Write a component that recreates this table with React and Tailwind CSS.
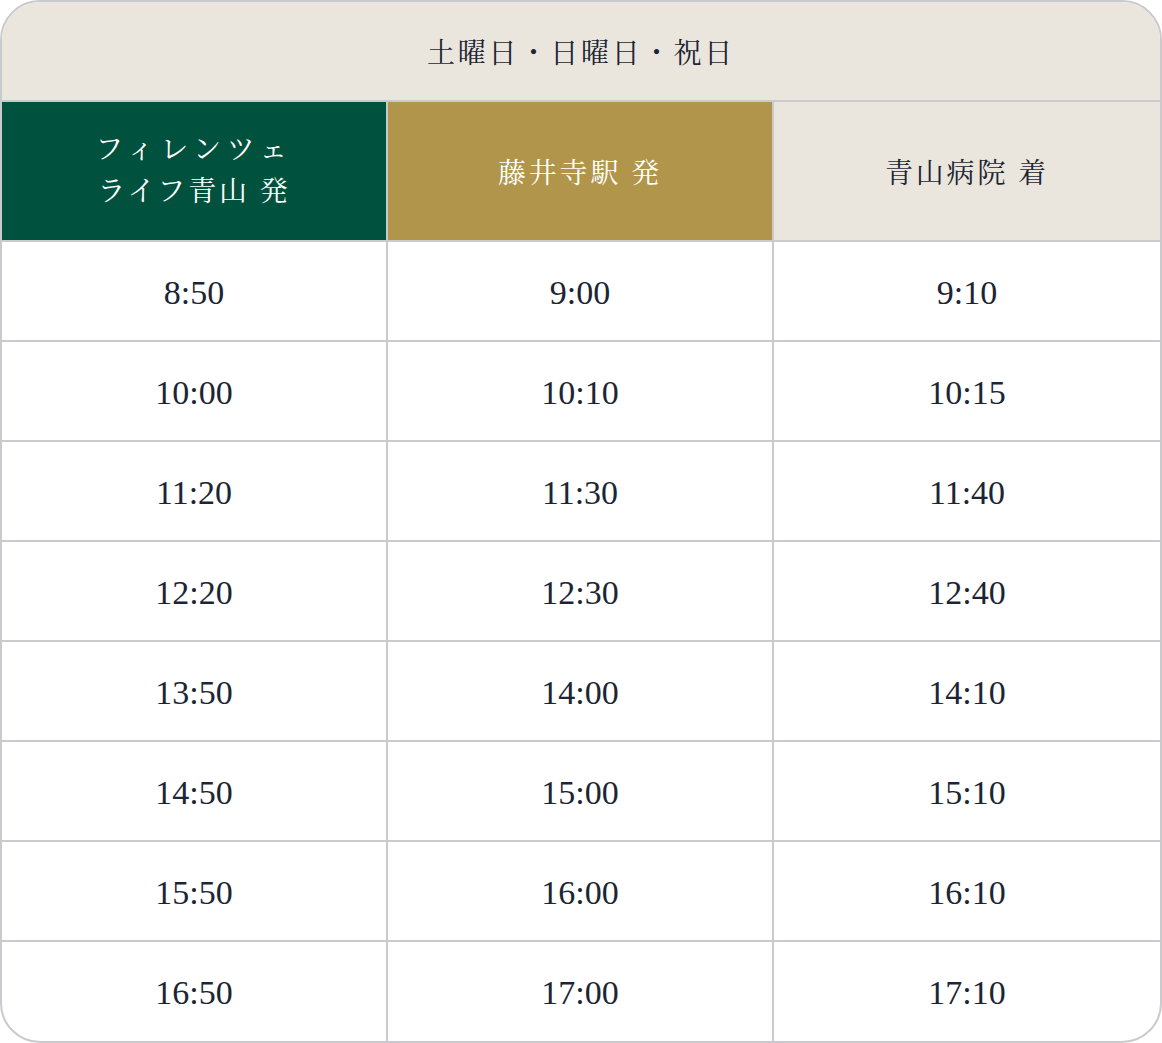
const rows = [
  ['8:50', '9:00', '9:10'],
  ['10:00', '10:10', '10:15'],
  ['11:20', '11:30', '11:40'],
  ['12:20', '12:30', '12:40'],
  ['13:50', '14:00', '14:10'],
  ['14:50', '15:00', '15:10'],
  ['15:50', '16:00', '16:10'],
  ['16:50', '17:00', '17:10'],
]

const serif = {
  fontFamily: '"Noto Serif CJK JP", "Liberation Serif", "Noto Sans CJK JP", serif',
}

export default function App() {
  return (
    <div className="w-[1162px] bg-white" style={serif}>
      <div className="border-2 border-[#c9c9ce] rounded-[40px] overflow-hidden text-[#1c2533]">
        <div className="h-[100px] bg-[#ebe6dd] flex items-center justify-center text-[28px] tracking-[0.1em] border-b-2 border-[#c9c9ce]">
          土曜日・日曜日・祝日
        </div>

        <div className="grid grid-cols-3 h-[140px] border-b-2 border-[#c9c9ce] divide-x-2 divide-[#c9c9ce] text-[28px] tracking-[0.1em] leading-[42px]">
          <div className="bg-[#00513d] text-white flex flex-col items-center justify-center pb-[6px]">
            <span className="tracking-[0.2em]">フィレンツェ</span>
            <span>ライフ青山 発</span>
          </div>
          <div className="bg-[#b0954a] text-white flex items-center justify-center">藤井寺駅 発</div>
          <div className="bg-[#ebe6dd] flex items-center justify-center">青山病院 着</div>
        </div>

        {rows.map((r, i) => (
          <div
            key={i}
            className={`grid grid-cols-3 divide-x-2 divide-[#c9c9ce] ${i < rows.length - 1 ? 'h-[100px] border-b-2 border-[#c9c9ce]' : 'h-[99px]'}`}
          >
            {r.map((t, j) => (
              <div key={j} className="flex items-center justify-center text-[34px] pt-[2px]" style={{ fontFamily: '"Liberation Serif", serif' }}>
                {t}
              </div>
            ))}
          </div>
        ))}
      </div>
    </div>
  )
}
